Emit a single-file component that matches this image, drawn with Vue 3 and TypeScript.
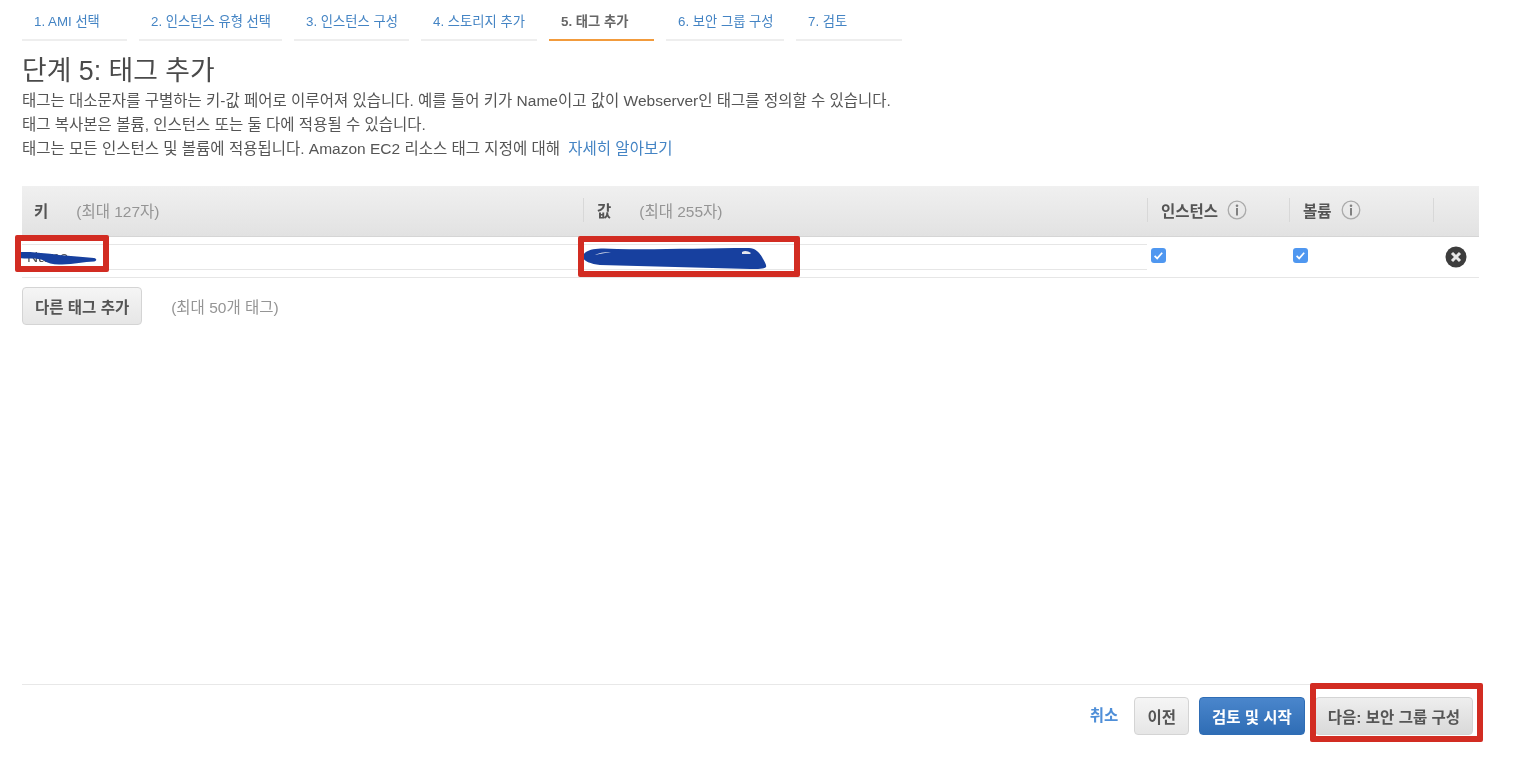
<script setup lang="ts">
interface Step {
  label: string
  width: number
  active?: boolean
}

const steps: Step[] = [
  { label: '1. AMI 선택', width: 105 },
  { label: '2. 인스턴스 유형 선택', width: 143 },
  { label: '3. 인스턴스 구성', width: 115 },
  { label: '4. 스토리지 추가', width: 116 },
  { label: '5. 태그 추가', width: 105, active: true },
  { label: '6. 보안 그룹 구성', width: 118 },
  { label: '7. 검토', width: 106 },
]
</script>

<template>
  <div class="page">
    <nav class="steps">
      <a
        v-for="step in steps"
        :key="step.label"
        :class="['step', { active: step.active }]"
        :style="{ width: step.width + 'px' }"
      >{{ step.label }}</a>
    </nav>

    <h1 class="title">단계 5: 태그 추가</h1>
    <div class="intro">
      <p>태그는 대소문자를 구별하는 키-값 페어로 이루어져 있습니다. 예를 들어 키가 Name이고 값이 Webserver인 태그를 정의할 수 있습니다.</p>
      <p>태그 복사본은 볼륨, 인스턴스 또는 둘 다에 적용될 수 있습니다.</p>
      <p>태그는 모든 인스턴스 및 볼륨에 적용됩니다. Amazon EC2 리소스 태그 지정에 대해 <a class="link">자세히 알아보기</a></p>
    </div>

    <div class="table">
      <div class="head">
        <div class="cell key-col"><b>키</b><span class="hint">(최대 127자)</span></div>
        <div class="cell value-col"><b>값</b><span class="hint">(최대 255자)</span></div>
        <div class="cell inst-col">
          <b>인스턴스</b>
          <svg class="info" width="20" height="20" viewBox="0 0 20 20">
            <circle cx="10" cy="10" r="8.8" fill="none" stroke="#aaa" stroke-width="1.3" />
            <circle cx="10" cy="5.800" r="1.3" fill="#808080" />
            <rect x="9" y="8" width="2" height="7.500" fill="#808080" />
          </svg>
        </div>
        <div class="cell vol-col">
          <b>볼륨</b>
          <svg class="info" width="20" height="20" viewBox="0 0 20 20">
            <circle cx="10" cy="10" r="8.8" fill="none" stroke="#aaa" stroke-width="1.3" />
            <circle cx="10" cy="5.800" r="1.3" fill="#808080" />
            <rect x="9" y="8" width="2" height="7.500" fill="#808080" />
          </svg>
        </div>
        <div class="cell del-col"></div>
      </div>

      <div class="row">
        <div class="key-col field-wrap"><div class="field">Name</div></div>
        <div class="value-col field-wrap"><div class="field"></div></div>
        <div class="inst-col check-wrap">
          <svg width="15" height="15" viewBox="0 0 15 15">
            <rect width="15" height="15" rx="3" fill="#4f97f0" />
            <path d="M3.6 7.8l2.6 2.6 5-5.6" fill="none" stroke="#fff" stroke-width="1.7" />
          </svg>
        </div>
        <div class="vol-col check-wrap">
          <svg width="15" height="15" viewBox="0 0 15 15">
            <rect width="15" height="15" rx="3" fill="#4f97f0" />
            <path d="M3.6 7.8l2.6 2.6 5-5.6" fill="none" stroke="#fff" stroke-width="1.7" />
          </svg>
        </div>
        <div class="del-col remove">
          <svg width="22" height="22" viewBox="0 0 22 22">
            <circle cx="11" cy="11" r="10.5" fill="#3d3d3d" />
            <path d="M7 7l8 8M15 7l-8 8" stroke="#e8e8e8" stroke-width="3" />
          </svg>
        </div>
      </div>
    </div>

    <div class="add-row">
      <button class="btn">다른 태그 추가</button>
      <span class="hint">(최대 50개 태그)</span>
    </div>

    <footer class="footer">
      <a class="link cancel">취소</a>
      <button class="btn">이전</button>
      <button class="btn primary">검토 및 시작</button>
      <button class="btn next">다음: 보안 그룹 구성</button>
    </footer>

    <!-- annotations drawn over the screenshot -->
    <svg class="scribble key-scribble" width="82" height="13" viewBox="0 0 82 13">
      <path d="M2 0c8-.5 16 0 24 1 6 .5 12 1 18 2 12 1 24 2 35 3 3 .5 3 3 0 3.500-10 .5-20 2.500-32 3-8 .5-14-1-18-4-4-1.500-8-2-12-2C5 6.500 0 6 0 3.500 0 1.500 1 .5 2 0z" fill="#17409f" />
    </svg>
    <svg class="scribble value-scribble" width="184" height="24" viewBox="0 0 184 24">
      <path d="M3 6C8 2 20 2 34 3c40 1 84-1 132-1 6 0 10 4 13 9 2 4 5 8 4 10-2 2-8 2-16 2-50-1-100-3-150-4C8 18 0 15 0 11c0-2 1-4 3-5z" fill="#17409f" />
      <path d="M12 9c4-2 8-3 16-3-6 1-12 2-16 3zM159 6c3-2 6-1 9 1l-1 1h-8z" fill="#e4e6ee" />
    </svg>
    <div class="mark mark-key"></div>
    <div class="mark mark-value"></div>
    <div class="mark mark-next"></div>
  </div>
</template>

<style>
html,
body {
  margin: 0;
  background: #fff;
}
</style>

<style scoped>
.page {
  position: relative;
  box-sizing: border-box;
  height: 766px;
  padding: 0 35px 30px 22px;
  display: flex;
  flex-direction: column;
  overflow: hidden;
  font-family: "Liberation Sans", "Noto Sans CJK KR", sans-serif;
  font-size: 15.5px;
  color: #555;
  filter: blur(0.45px);
}

.steps {
  display: flex;
  gap: 12px;
  height: 41px;
  box-sizing: border-box;
}

.step {
  box-sizing: border-box;
  height: 41px;
  padding: 14px 0 0 12px;
  border-bottom: 2px solid #eee;
  font-size: 13.3px;
  line-height: 16px;
  color: #4484c4;
}

.step.active {
  color: #666;
  font-weight: 700;
  border-bottom-color: #f29b3c;
}

.title {
  margin: 14px 0 0;
  font-size: 26.8px;
  line-height: 32px;
  font-weight: 400;
  color: #4a4a4a;
}

.intro {
  margin-top: 2px;
}

.intro p {
  margin: 0;
  line-height: 24px;
}

.link {
  color: #4484c4;
  margin-left: 4px;
}

.table {
  margin-top: 25px;
}

.head {
  display: flex;
  align-items: center;
  height: 51px;
  box-sizing: border-box;
  padding-bottom: 2px;
  background: linear-gradient(#f0f0f0, #e2e2e2);
  border-bottom: 1px solid #d5d5d5;
}

.row {
  display: flex;
  height: 40px;
  border-bottom: 1px solid #e6e6e6;
}

.key-col {
  width: 561px;
}

.value-col {
  width: 564px;
}

.inst-col {
  width: 142px;
}

.vol-col {
  width: 144px;
}

.del-col {
  width: 46px;
}

.cell {
  box-sizing: border-box;
  height: 24px;
  padding-left: 13px;
  display: flex;
  align-items: center;
  border-left: 1px solid #d8d8d8;
}

.cell.key-col {
  border-left: 0;
  padding-left: 12px;
}

.cell b {
  color: #555;
}

.hint {
  color: #959595;
  margin-left: 28px;
}

.info {
  margin-left: 9px;
}

.field-wrap {
  padding-top: 7px;
}

.field {
  box-sizing: border-box;
  height: 26px;
  border-top: 1px solid #e6e6e6;
  border-bottom: 1px solid #e6e6e6;
  padding-left: 5px;
  line-height: 24px;
  color: #555;
}

.check-wrap {
  box-sizing: border-box;
  padding: 11px 0 0 4px;
}

.remove {
  box-sizing: border-box;
  padding: 9px 0 0 12px;
}

.add-row {
  display: flex;
  align-items: center;
  margin-top: 9px;
}

.add-row .hint {
  margin-left: 29px;
}

.btn {
  box-sizing: border-box;
  height: 38px;
  padding: 0 12px;
  border: 1px solid #d4d4d4;
  border-radius: 4px;
  background: linear-gradient(#f5f5f5, #e6e6e6);
  font-family: inherit;
  font-size: 15.5px;
  font-weight: 700;
  color: #555;
}

.footer {
  box-sizing: border-box;
  margin-top: auto;
  height: 52px;
  border-top: 1px solid #e8e8e8;
  padding: 12px 6px 0 0;
  display: flex;
  justify-content: flex-end;
  align-items: flex-start;
  gap: 10px;
}

.cancel {
  font-weight: 700;
  margin-right: 6px;
  line-height: 38px;
  color: #4f8fd8;
}

.btn.primary {
  background: linear-gradient(#4a86cc, #2f6db5);
  border-color: #2f6db5;
  color: #fff;
}

.btn.next {
  background: linear-gradient(#eeeeee, #d9d9d9);
}

.scribble {
  position: absolute;
}

.key-scribble {
  left: 15px;
  top: 252px;
}

.value-scribble {
  left: 583px;
  top: 246px;
}

.mark {
  position: absolute;
  box-sizing: border-box;
  border: 6px solid #d22c22;
  border-radius: 2px;
}

.mark-key {
  left: 15px;
  top: 235px;
  width: 94px;
  height: 37px;
}

.mark-value {
  left: 578px;
  top: 236px;
  width: 222px;
  height: 41px;
}

.mark-next {
  left: 1310px;
  top: 683px;
  width: 173px;
  height: 59px;
}
</style>
